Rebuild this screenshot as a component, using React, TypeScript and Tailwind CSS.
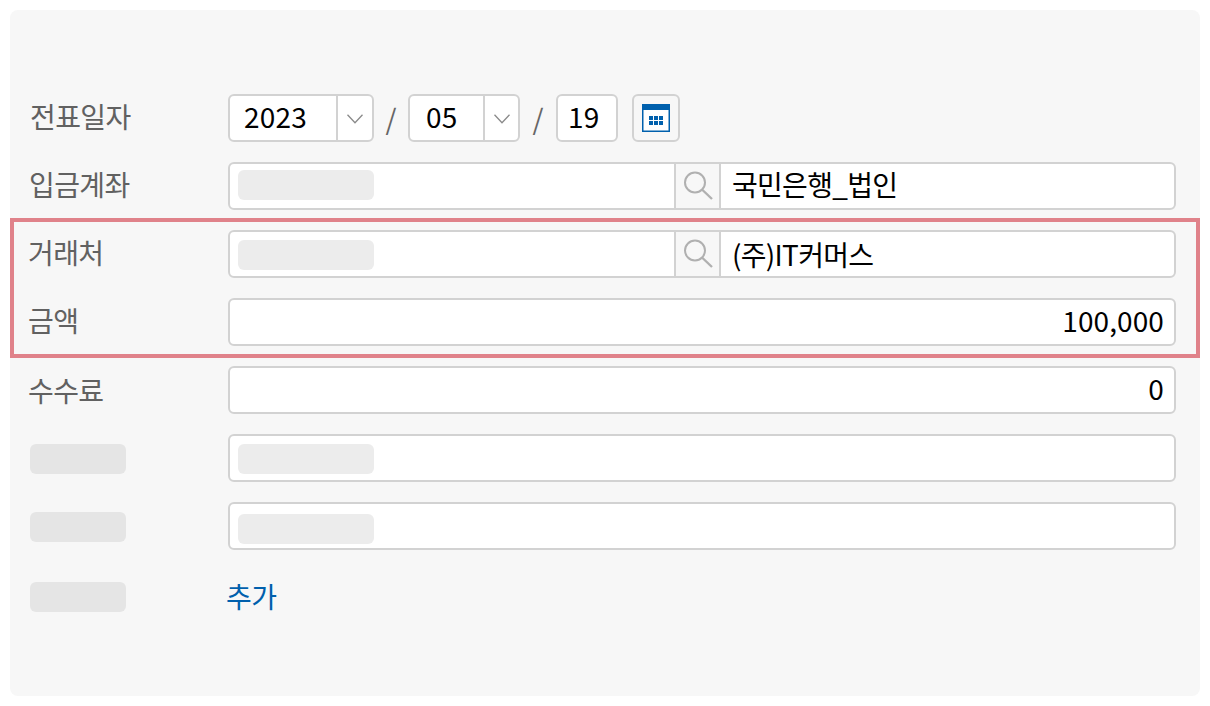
const font = '"Noto Sans CJK KR", "Noto Sans", sans-serif';

function Chevron() {
  return (
    <svg width="16" height="10" viewBox="0 0 16 10" fill="none" className="block">
      <path d="M0.5 0.8 L8 8.8 L15.5 0.8" stroke="#8a8a8a" strokeWidth="1.3" />
    </svg>
  );
}

function SearchIcon() {
  return (
    <svg width="30" height="30" viewBox="0 0 30 30" fill="none" className="block">
      <circle cx="12" cy="11.5" r="10" stroke="#b0b0b0" strokeWidth="2" />
      <path d="M19 18.5 L29 28" stroke="#b0b0b0" strokeWidth="2.4" />
    </svg>
  );
}

function CalendarIcon() {
  return (
    <svg width="28" height="28" viewBox="0 0 28 28" className="block">
      <rect x="0.75" y="0.75" width="26.5" height="26.5" fill="#fff" stroke="#0060ad" strokeWidth="1.5" />
      <rect x="0" y="0" width="28" height="6" fill="#0060ad" />
      {[7, 12, 17].map((x) =>
        [12, 17].map((y) => <rect key={`${x}-${y}`} x={x} y={y} width="4" height="4" fill="#0060ad" />)
      )}
    </svg>
  );
}

function Label({ children, className = '' }: { children: string; className?: string }) {
  return <div className={`w-[198px] shrink-0 text-[28px] leading-[48px] tracking-[-0.6px] text-[#616161] ${className}`}>{children}</div>;
}

function LabelBlank({ className = '' }: { className?: string }) {
  return (
    <div className="w-[198px] shrink-0">
      <div className={`h-[30px] w-[96px] rounded-md bg-[#e5e5e5] ${className}`} />
    </div>
  );
}

function Blank({ className = '' }: { className?: string }) {
  return <div className={`ml-2 h-[30px] w-[136px] rounded-md bg-[#ececec] ${className}`} />;
}

function Select({ value, textBox, boxClass }: { value: string; textBox: string; boxClass: string }) {
  return (
    <div className={`box-border flex h-12 items-center overflow-hidden rounded-md border-2 border-[#d2d2d2] bg-white text-[28px] tracking-[0.2px] text-black ${boxClass}`}>
      <div className={`h-full leading-[40px] ${textBox}`}>{value}</div>
      <div className="flex h-full flex-1 items-center justify-center border-l-2 border-[#d2d2d2] pt-0.5">
        <Chevron />
      </div>
    </div>
  );
}

function LookupInput({ value, blankClass, textClass }: { value: string; blankClass: string; textClass: string }) {
  return (
    <div className="box-border flex h-12 w-[948px] items-stretch overflow-hidden rounded-md border-2 border-[#d2d2d2] bg-white">
      <div className="w-[445px]">
        <Blank className={blankClass} />
      </div>
      <div className="-ml-px flex w-[47px] items-center justify-center border-x-2 border-[#d2d2d2] bg-[#f7f7f7]">
        <SearchIcon />
      </div>
      <div className={`flex-1 pl-[11px] text-[28px] tracking-[-0.7px] text-black ${textClass}`}>{value}</div>
    </div>
  );
}

function AmountInput({ value }: { value: string }) {
  return (
    <div className="box-border h-12 w-[948px] rounded-md border-2 border-[#d2d2d2] bg-white pr-[10px] text-right text-[28px] leading-[40px] tracking-[0.1px] text-black">
      {value}
    </div>
  );
}

function BlankInput({ blankClass }: { blankClass: string }) {
  return (
    <div className="box-border h-12 w-[948px] rounded-md border-2 border-[#d2d2d2] bg-white">
      <Blank className={blankClass} />
    </div>
  );
}

export default function App() {
  return (
    <div className="h-[706px] bg-white p-[10px]" style={{ fontFamily: font }}>
      <div className="box-border h-[686px] rounded-lg bg-[#f7f7f7] pl-5 pr-6 pt-[84px]">
        <div className="flex flex-col gap-5">
          <div className="flex h-12 items-center">
            <Label className="-mt-1">전표일자</Label>
            <Select value="2023" textBox="w-[106px] pl-[14px]" boxClass="w-[146px]" />
            <div className="w-[34px] text-center text-[28px] text-[#666666]">/</div>
            <Select value="05" textBox="w-[73px] pl-4" boxClass="w-[112px]" />
            <div className="w-9 text-center text-[28px] text-[#666666]">/</div>
            <div className="box-border h-12 w-[62px] rounded-md border-2 border-[#d2d2d2] bg-white pl-2.5 text-[28px] leading-[40px] tracking-[0.2px] text-black">19</div>
            <div className="ml-3.5 box-border flex h-12 w-12 items-center justify-center rounded-md border-2 border-[#d2d2d2] bg-[#f7f7f7]">
              <CalendarIcon />
            </div>
          </div>

          <div className="flex h-12 items-center">
            <Label className="-ml-px mr-px -mt-1">입금계좌</Label>
            <LookupInput value="국민은행_법인" blankClass="mt-1.5" textClass="leading-[40px]" />
          </div>

          <div className="-mx-5 -mr-6 -my-3 flex flex-col gap-5 border-4 border-[#e0828a] py-2 pl-4 pr-5">
            <div className="flex h-12 items-center">
              <Label className="-ml-0.5 mr-0.5 -mt-1">거래처</Label>
              <LookupInput value="(주)IT커머스" blankClass="mt-2" textClass="leading-[44px]" />
            </div>
            <div className="flex h-12 items-center">
              <Label className="-ml-0.5 mr-0.5 -mt-1">금액</Label>
              <AmountInput value="100,000" />
            </div>
          </div>

          <div className="flex h-12 items-center">
            <Label className="-ml-0.5 mr-0.5">수수료</Label>
            <AmountInput value="0" />
          </div>

          <div className="flex h-12 items-start">
            <LabelBlank className="mt-2.5" />
            <BlankInput blankClass="mt-2" />
          </div>

          <div className="flex h-12 items-start">
            <LabelBlank className="mt-2.5" />
            <BlankInput blankClass="mt-2.5" />
          </div>

          <div className="flex h-12 items-center">
            <LabelBlank className="mt-[6px]" />
            <div className="-ml-0.5 mt-1 text-[28px] leading-[48px] tracking-[-0.6px] text-[#0060ad]">추가</div>
          </div>
        </div>
      </div>
    </div>
  );
}
